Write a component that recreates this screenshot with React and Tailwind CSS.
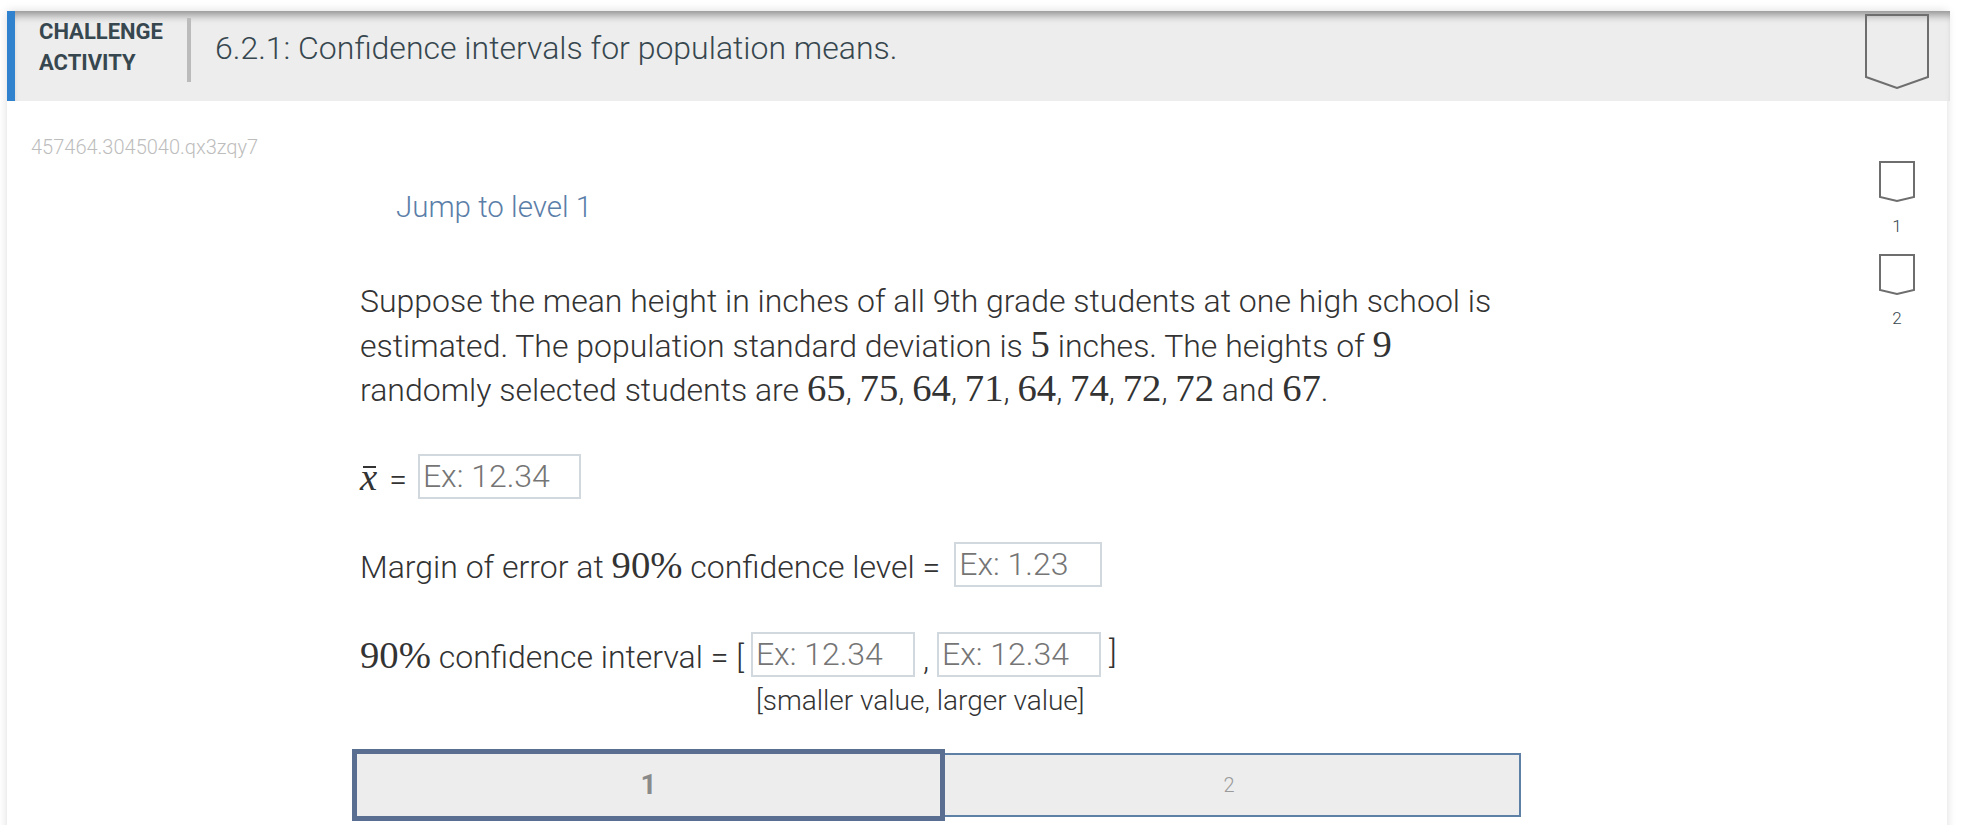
import React from "react";

const roboto = "font-['Roboto',sans-serif]";

function Badge({ w, h, shoulder }) {
  return (
    <svg width={w} height={h} viewBox={`0 0 ${w} ${h}`} className="block" fill="none" stroke="#6e6e6e" strokeWidth="2">
      <path d={`M1 1H${w - 1}V${shoulder}L${w / 2} ${h - 1}L1 ${shoulder}Z`} />
    </svg>
  );
}

function M({ children }) {
  return <span className="font-['Liberation_Serif',serif] text-[38.7px] leading-[38px] font-normal text-[#333]">{children}</span>;
}

function Field({ placeholder, className = "" }) {
  return (
    <input
      placeholder={placeholder}
      className={`h-[45px] border-2 border-[#d1d8de] bg-white pl-[3px] text-[32px] font-light outline-none placeholder:text-[#757575] ${className}`}
    />
  );
}

export default function App() {
  return (
    <div className={`h-[825px] overflow-hidden bg-white pt-[11px] pl-[7px] pr-[17px] ${roboto}`}>
      <div className="h-[850px] bg-white shadow-[0_0_9px_rgba(0,0,0,0.14)]">
        {/* Header */}
        <div className="-mr-[3px] flex h-[90px] border-l-[8px] border-[#3182ce] bg-[#ededed] pl-[24px] pr-[21px] shadow-[inset_0_9px_9px_-5px_rgba(0,0,0,0.4)]">
          <div className="pt-[5px] text-[22px] leading-[31px] font-bold text-[#37474f]">
            <div>CHALLENGE</div>
            <div>ACTIVITY</div>
          </div>
          <div className="mt-[7px] ml-[24px] h-[64px] w-[4px] bg-[#bbbbbb]" />
          <div className="ml-[24px] pt-[14px] text-[32px] leading-[46px] font-light text-[#37474f]">
            6.2.1: Confidence intervals for population means.
          </div>
          <div className="ml-auto pt-[3px]">
            <Badge w={64} h={75} shoulder={63} />
          </div>
        </div>

        {/* Body */}
        <div className="flex">
          <div className="flex-1">
            <div className="pt-[34px] pl-[24px] text-[20px] leading-[24px] font-light text-[#bdbdbd]">457464.3045040.qx3zqy7</div>
            <div className="ml-[345px] w-[1169px] text-[32px] font-light text-[#333]">
              <div className="pt-[28px] pl-[44px] text-[29.5px] leading-[40px] text-[#5b7ea8]">Jump to level 1</div>
              <div className="w-[1153px] pt-[52px] pl-[8px] leading-[44.5px]">
                Suppose the mean height in inches of all 9th grade students at one high school is estimated. The population standard deviation is <M>5</M> inches. The heights of <M>9</M> randomly selected students are <M>65</M>, <M>75</M>, <M>64</M>, <M>71</M>, <M>64</M>, <M>74</M>, <M>72</M>, <M>72</M> and <M>67</M>.
              </div>
              <div className="mt-[41px] flex h-[45px] items-end pl-[8px]">
                <span className="mr-[11px] leading-[40px]">
                  <span className="relative font-['Liberation_Serif',serif] text-[38.7px] italic font-normal">
                    x
                    <span className="absolute top-[10px] left-[3px] h-[2px] w-[13px] bg-[#333]" />
                  </span>
                  <span className="ml-[12px]">=</span>
                </span>
                <Field placeholder="Ex: 12.34" className="w-[163px]" />
              </div>
              <div className="mt-[43px] flex h-[45px] items-end pl-[8px]">
                <span className="mr-[14px] leading-[40px]">Margin of error at <M>90%</M> confidence level =</span>
                <Field placeholder="Ex: 1.23" className="w-[148px]" />
              </div>
              <div className="mt-[45px] flex h-[45px] items-end pl-[8px]">
                <span className="mr-[7px] leading-[40px]"><M>90%</M> confidence interval = [</span>
                <Field placeholder="Ex: 12.34" className="w-[164px]" />
                <span className="mx-[8px] leading-[36px]">,</span>
                <Field placeholder="Ex: 12.34" className="w-[164px]" />
                <span className="ml-[8px] self-start leading-[40px]">]</span>
              </div>
              <div className="pt-[4px] pl-[404px] text-[28px] leading-[40px]">[smaller value, larger value]</div>
              <div className="mt-[28px] flex h-[72px] items-center text-center">
                <div className="flex h-[72px] w-[593px] items-center justify-center border-[5px] border-[#5a6e92] bg-[#ededed] text-[28px] font-bold text-[#8a8a8a]">1</div>
                <div className="flex h-[64px] flex-1 items-center justify-center border-2 border-l-0 border-[#5f80a6] bg-[#ededed] pr-[6px] text-[20px] text-[#9a9a9a]">2</div>
              </div>
            </div>
          </div>

          {/* Level rail */}
          <div className="mr-[32px] w-[36px] pt-[60px] text-center text-[17px] leading-[20px] font-light text-[#37474f]">
            <Badge w={36} h={41} shoulder={36} />
            <div className="mt-[14px]">1</div>
            <div className="mt-[18px]"><Badge w={36} h={41} shoulder={36} /></div>
            <div className="mt-[13px]">2</div>
          </div>
        </div>
      </div>
    </div>
  );
}
